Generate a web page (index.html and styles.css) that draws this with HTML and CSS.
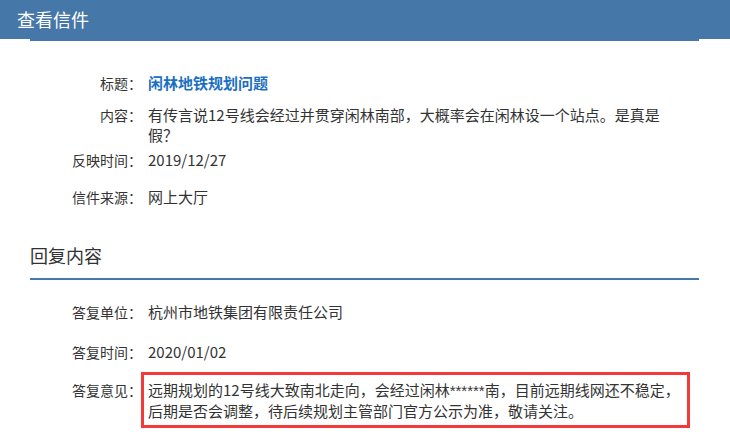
FILE: index.html
```html
<!DOCTYPE html>
<html lang="zh-CN">
<head>
<meta charset="utf-8">
<title>查看信件</title>
<link rel="stylesheet" href="styles.css">
</head>
<body>
<div class="topbar">查看信件</div>
<div class="panel">
  <div class="info">
    <div class="row r1"><span class="label">标题：</span><span class="value title">闲林地铁规划问题</span></div>
    <div class="row r2"><span class="label">内容：</span><span class="value">有传言说12号线会经过并贯穿闲林南部，大概率会在闲林设一个站点。是真是假？</span></div>
    <div class="row r3"><span class="label">反映时间：</span><span class="value">2019/12/27</span></div>
    <div class="row r4"><span class="label">信件来源：</span><span class="value">网上大厅</span></div>
  </div>
  <h2 class="section-title">回复内容</h2>
  <div class="reply">
    <div class="row r5"><span class="label">答复单位：</span><span class="value">杭州市地铁集团有限责任公司</span></div>
    <div class="row r6"><span class="label">答复时间：</span><span class="value">2020/01/02</span></div>
    <div class="row r7"><span class="label label-boxed">答复意见：</span><span class="value boxed">远期规划的12号线大致南北走向，会经过闲林<span class="stars">******</span>南，目前远期线网还不稳定，后期是否会调整，待后续规划主管部门官方公示为准，敬请关注。</span></div>
  </div>
</div>
</body>
</html>
```
FILE: styles.css
```css
* { box-sizing: border-box; }
body {
  margin: 0;
  font-family: "Noto Sans CJK SC", "Noto Sans", sans-serif;
  color: #333;
  background: #fff;
}
.topbar {
  height: 39px;
  line-height: 39px;
  background: #4577a8;
  color: #fff;
  font-size: 18px;
  padding-left: 17px;
}
.panel {
  margin: 0 31px 0 30px;
  border-top: 2px solid #4577a8;
}
.info { padding-top: 32px; }
.row {
  display: grid;
  grid-template-columns: 112px 1fr;
  column-gap: 6px;
  line-height: 20px;
  padding-right: 12px;
}
.label {
  font-size: 14px;
  text-align: right;
  color: #333;
}
.value { font-size: 15px; color: #333; }
.title { color: #1b6fc2; font-weight: bold; }
.r1 { margin-bottom: 12px; }
.r2 { margin-bottom: 5px; }
.r3 { margin-bottom: 17px; }
.section-title {
  margin: 36px 0 0 0;
  font-size: 18px;
  font-weight: normal;
  line-height: 24px;
  padding-bottom: 11px;
  border-bottom: 2px solid #4577a8;
  color: #333;
}
.r5 { margin-top: 22px; margin-bottom: 20px; }
.r6 { margin-bottom: 10px; }
.label-boxed { padding-top: 8px; }
.boxed {
  margin-left: -7px;
  margin-right: -3px;
  border: 3px solid #f33a3a;
  padding: 5px 0 4px 4px;
}
.stars { font-family: "Liberation Sans", sans-serif; }
```
